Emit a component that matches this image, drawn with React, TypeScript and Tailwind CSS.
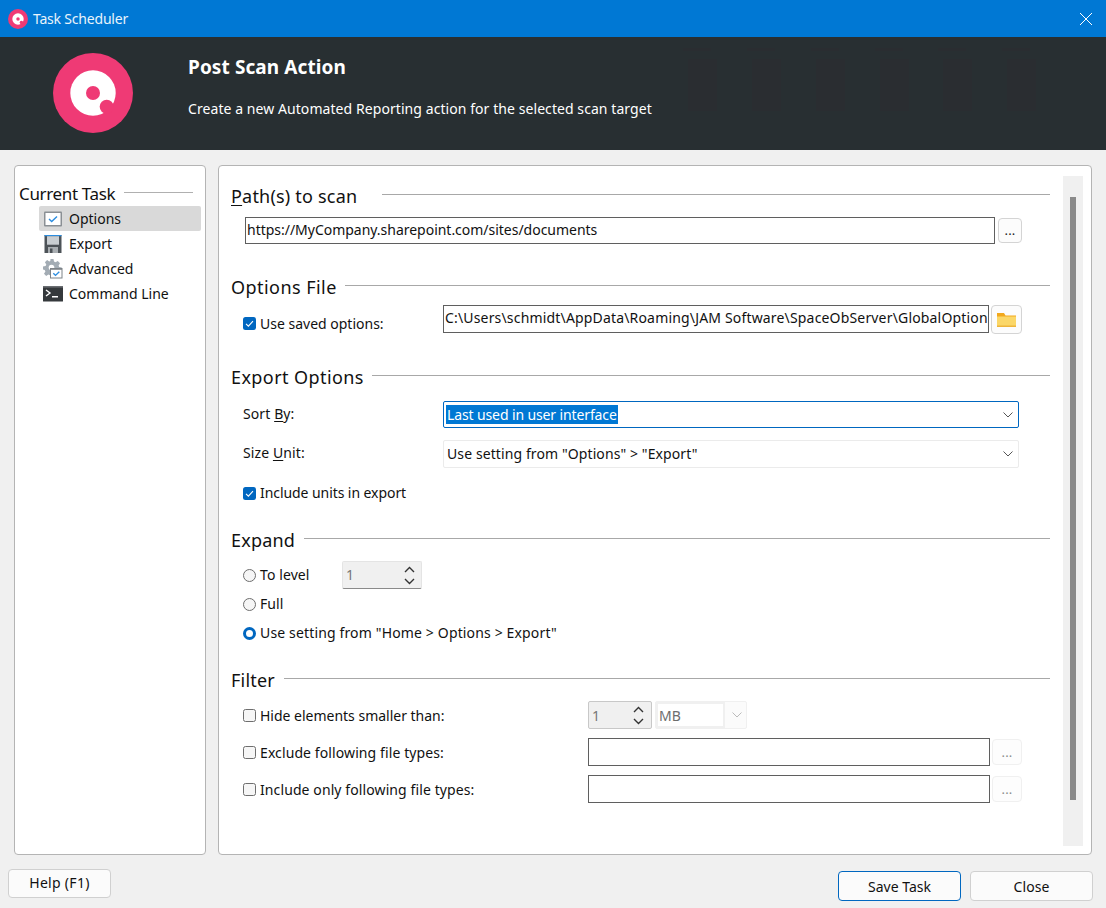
import React from "react";

function Logo({ size }: { size: number }) {
  return (
    <svg width={size} height={size} viewBox="0 0 80 80" className="shrink-0">
      <circle cx="40" cy="40" r="40" fill="#ef3a75" />
      <circle cx="40" cy="40" r="22.7" fill="#fff" />
      <circle cx="40" cy="40" r="7" fill="#ef3a75" />
      <circle cx="53.7" cy="53.7" r="7" fill="#ef3a75" />
    </svg>
  );
}

function Heading({ children, className }: { children: React.ReactNode; className: string }) {
  return (
    <div className={"flex h-[28px] w-[819px] items-center text-[18px] tracking-[0.2px] text-[#111] " + className}>
      <span>{children}</span>
      <div className="mb-[4px] h-px flex-1 bg-[#a8a8a8]" />
    </div>
  );
}

function Check({ on = false }: { on?: boolean }) {
  return on ? (
    <svg width="13" height="13" viewBox="0 0 13 13" className="shrink-0">
      <rect width="13" height="13" rx="2.5" fill="#0067c0" />
      <path d="M3 6.8 5.4 9.2 10 4.2" fill="none" stroke="#fff" strokeWidth="1.1" />
    </svg>
  ) : (
    <div className="h-[13px] w-[13px] shrink-0 rounded-[2.5px] border border-[#6e6e6e] bg-[#f6f6f6]" />
  );
}

function Radio({ on = false }: { on?: boolean }) {
  return on ? (
    <div className="h-[13px] w-[13px] shrink-0 rounded-full border-[3.5px] border-[#0067c0] bg-white" />
  ) : (
    <div className="h-[13px] w-[13px] shrink-0 rounded-full border border-[#6e6e6e] bg-[#f6f6f6]" />
  );
}

function Chevron({ color = "#555" }: { color?: string }) {
  return (
    <svg width="10" height="6" viewBox="0 0 10 6" className="shrink-0">
      <path d="M.5.5 5 5 9.5.5" fill="none" stroke={color} strokeWidth="1" />
    </svg>
  );
}

function Spin() {
  return (
    <svg width="11" height="19" viewBox="0 0 11 19" className="shrink-0">
      <path d="M1 6 5.5 1.5 10 6M1 13 5.5 17.5 10 13" fill="none" stroke="#333" strokeWidth="1.4" />
    </svg>
  );
}

function Dots({ className, dim = false }: { className: string; dim?: boolean }) {
  return (
    <div
      className={
        "flex items-center justify-center rounded-[4px] border pt-[1px] text-[13px] " +
        (dim ? "border-[#f0f0f0] bg-[#fdfdfd] text-[#8c8c8c] " : "border-[#d4d4d4] bg-[#fcfcfc] text-[#222] ") +
        className
      }
    >
      ...
    </div>
  );
}

const treeIcons = {
  options: (
    <svg width="20" height="20" viewBox="0 0 20 20">
      <rect x="1" y="2.5" width="18" height="15" rx="1" fill="#8a8f94" />
      <rect x="2.5" y="4" width="15" height="12" fill="#fff" />
      <path d="M6 10 8.7 12.6 14 7.5" fill="none" stroke="#2b8de0" strokeWidth="1.4" />
    </svg>
  ),
  export: (
    <svg width="20" height="20" viewBox="0 0 20 20">
      <path d="M1.5 1H18.5V19H1.5Z" fill="#4d5358" />
      <rect x="1.5" y="1" width="17" height="1.2" fill="#2b8de0" />
      <rect x="4" y="2.2" width="12" height="8.5" fill="#c9ced2" />
      <rect x="5" y="13" width="10" height="6" fill="#a9aeb2" />
      <rect x="7" y="14.5" width="2.5" height="4.5" fill="#4d5358" />
    </svg>
  ),
  advanced: (
    <svg width="20" height="20" viewBox="0 0 20 20">
      <path
        d="M7.5 0h3l.5 2.6 1.5.7L14.8 2 17 4.200l-1.400 2.200.6 1.500 2.600.5v1.600H7v6.200l-1.600-.7L3.200 16.900 1 14.700l1.400-2.200-.7-1.500L0 10.500v-3l2.600-.5.7-1.500L1.900 3.200 4.100 1l2.200 1.400 1-.4Z"
        fill="#a3acb4"
      />
      <circle cx="8.500" cy="8.500" r="2.800" fill="#fff" />
      <rect x="7" y="9" width="12.500" height="10.500" fill="#7d8388" />
      <rect x="8" y="10.800" width="10.500" height="7.700" fill="#fff" />
      <path d="M10.300 14.300 12.500 16.400 16.300 12.700" fill="none" stroke="#2b8de0" strokeWidth="1.400" />
    </svg>
  ),
  command: (
    <svg width="20" height="20" viewBox="0 0 20 20">
      <rect x="0" y="2" width="20" height="15.500" rx=".5" fill="#35393c" />
      <rect x="0" y="2" width="20" height="1.600" fill="#6a6e72" />
      <path d="M3 6 7 9 3 12" fill="none" stroke="#fff" strokeWidth="1.400" />
      <rect x="9" y="12" width="6" height="1.500" fill="#fff" />
    </svg>
  ),
};

function TreeRow({ icon, label, selected = false }: { icon: React.ReactNode; label: string; selected?: boolean }) {
  return (
    <div className={"flex h-[25px] items-center rounded-[2px] pl-[4px] tracking-[0px] " + (selected ? "bg-[#d9d9d9]" : "")}>
      <div className="flex w-[26px] shrink-0">{icon}</div>
      <span>{label}</span>
    </div>
  );
}

export default function App() {
  return (
    <div className="flex h-[908px] w-[1106px] flex-col overflow-hidden bg-[#f0f0f0] font-['Noto_Sans',sans-serif] text-[14px] tracking-[0.1px] text-[#111]">
      {/* Title bar */}
      <div className="flex h-[37px] shrink-0 items-center bg-[#0078d4] pl-[8px] pr-[13px] text-white">
        <Logo size={20} />
        <span className="ml-[5px] flex-1 text-[14px] tracking-[-0.2px] text-[#e8f3fb]">Task Scheduler</span>
        <svg width="14" height="14" viewBox="0 0 14 14">
          <path d="M1 1 13 13M13 1 1 13" stroke="#fff" strokeWidth="1" fill="none" />
        </svg>
      </div>

      {/* Banner */}
      <div className="relative flex h-[113px] shrink-0 items-start bg-[#282f32] text-white">
        <div className="ml-[53px] mt-[16px]">
          <Logo size={80} />
        </div>
        <div className="ml-[55px]">
          <div className="mt-[16px] text-[19px] font-bold leading-[28px]">Post Scan Action</div>
          <div className="mt-[18px] leading-[20px] tracking-[0.07px]">Create a new Automated Reporting action for the selected scan target</div>
        </div>
        <svg width="400" height="113" viewBox="0 0 400 113" className="absolute left-[670px] top-0">
          {[0, 64, 128, 192, 255, 319].map((x) => (
            <g key={x} fill="#2a2d31">
              <rect x={13 + x} y="11" width="28" height="3" />
              <rect x={18 + x} y="22" width="29" height="52" />
            </g>
          ))}
        </svg>
      </div>

      {/* Panels */}
      <div className="flex h-[705px] shrink-0 gap-[12px] pl-[14px] pt-[15px]">
        <div className="h-[690px] w-[192px] rounded-[4px] border border-[#b4b4b4] bg-white pl-[4px] pr-[4px] pt-[15px]">
          <div className="flex h-[25px] items-center text-[17px] tracking-[-0.35px]">
            <span>Current Task</span>
            <div className="mb-[3px] ml-[9px] mr-[8px] h-px flex-1 bg-[#b0b0b0]" />
          </div>
          <div className="ml-[20px]">
            <TreeRow icon={treeIcons.options} label="Options" selected />
            <TreeRow icon={treeIcons.export} label="Export" />
            <TreeRow icon={treeIcons.advanced} label="Advanced" />
            <TreeRow icon={treeIcons.command} label="Command Line" />
          </div>
        </div>

        <div className="flex h-[690px] w-[874px] rounded-[4px] border border-[#b4b4b4] bg-white pl-[12px] pr-[8px] pt-[10px]">
          <div className="-mt-[10px] w-[832px] shrink-0">
            <Heading className="mt-[16px] gap-[25px]">
              <span className="underline underline-offset-2">P</span>ath(s) to scan
            </Heading>
            <div className="ml-[14px] mt-[7px] flex items-center gap-[3px]">
              <div className="flex h-[27px] w-[750px] items-center border border-[#5f5f5f] bg-white px-[1px]">
                <span className="mb-[2px] tracking-[-0.02px]">https://MyCompany.sharepoint.com/sites/documents</span>
              </div>
              <Dots className="h-[25px] w-[24px]" />
            </div>

            <Heading className="mt-[29px] gap-[8px]">
              <span className="tracking-[0.45px]">Options File</span>
            </Heading>
            <div className="ml-[12px] mt-[4px] flex h-[29px] items-center">
              <div className="mt-[8px] flex w-[200px] items-center gap-[4px]">
                <Check on />
                <span className="tracking-[0px]">Use saved options:</span>
              </div>
              <div className="mb-[1px] flex h-[28px] w-[546px] items-center whitespace-nowrap border border-[#5f5f5f] bg-white px-[1px]">
                <span className="mb-[3px] tracking-[0.17px]">C:\Users\schmidt\AppData\Roaming\JAM Software\SpaceObServer\GlobalOption</span>
              </div>
              <div className="ml-[2px] flex h-[29px] w-[31px] items-center justify-center rounded-[4px] border border-[#d4d4d4] bg-[#fcfcfc]">
                <svg width="19" height="14" viewBox="0 0 19 14">
                  <path d="M0 0H7L8.500 2.500H19V4H0Z" fill="#f2a81d" />
                  <rect y="3.500" width="19" height="10.500" fill="#fbd768" />
                  <rect y="12.500" width="19" height="1.500" fill="#eeb53b" />
                </svg>
              </div>
            </div>

            <Heading className="mt-[29px] gap-[8px]">
              <span className="tracking-[0.42px]">Export Options</span>
            </Heading>
            <div className="ml-[12px] mt-[10px] flex h-[27px] items-center">
              <div className="mb-[2px] w-[200px]">Sort <span className="underline underline-offset-2">B</span>y:</div>
              <div className="flex h-[27px] w-[576px] items-center justify-between rounded-[2px] border border-[#0067c0] bg-white pl-[2px] pr-[5px]">
                <span className="bg-[#0078d4] px-[1px] leading-[19px] tracking-[-0.12px] text-white">Last used in user interface</span>
                <Chevron />
              </div>
            </div>
            <div className="ml-[12px] mt-[12px] flex h-[28px] items-center">
              <div className="mb-[4px] w-[200px]">Size <span className="underline underline-offset-2">U</span>nit:</div>
              <div className="flex h-[28px] w-[576px] items-center justify-between rounded-[2px] border border-[#ebebeb] bg-white pl-[3px] pr-[5px]">
                <span className="mb-[2px]">Use setting from "Options" &gt; "Export"</span>
                <Chevron />
              </div>
            </div>
            <div className="ml-[12px] mt-[12px] flex h-[26px] items-center gap-[4px]">
              <Check on />
              <span className="mb-[2px] tracking-[-0.07px]">Include units in export</span>
            </div>

            <Heading className="mt-[20px] gap-[9px]">Expand</Heading>
            <div className="ml-[12px] mt-[7px] flex h-[28px] items-center">
              <div className="flex w-[99px] items-center gap-[4px]">
                <Radio />
                <span className="mb-[2px]">To level</span>
              </div>
              <div className="flex h-[28px] w-[80px] items-center justify-between rounded-[2px] border-b border-l border-r border-t border-b-[#8a8a8a] border-l-[#e4e4e4] border-r-[#e4e4e4] border-t-[#e4e4e4] bg-[#f0f0f0] pl-[3px] pr-[6px] text-[#777]">
                <span className="mb-[2px]">1</span>
                <Spin />
              </div>
            </div>
            <div className="ml-[12px] mt-[2px] flex h-[26px] items-center gap-[4px]">
              <Radio />
              <span className="mb-[2px]">Full</span>
            </div>
            <div className="ml-[12px] mt-[3px] flex h-[26px] items-center gap-[4px]">
              <Radio on />
              <span className="mb-[2px] tracking-[0.15px]">Use setting from "Home &gt; Options &gt; Export"</span>
            </div>

            <Heading className="mt-[20px] gap-[9px]">Filter</Heading>
            <div className="ml-[12px] mt-[7px] flex h-[28px] items-center">
              <div className="flex w-[345px] items-center gap-[4px]">
                <Check />
                <span className="tracking-[-0.01px]">Hide elements smaller than:</span>
              </div>
              <div className="flex h-[28px] w-[64px] items-center justify-between rounded-[2px] border border-[#c8c8c8] bg-[#f0f0f0] pl-[3px] pr-[7px] text-[#777]">
                <span>1</span>
                <Spin />
              </div>
              <div className="ml-[3px] flex h-[28px] w-[92px] items-center rounded-[2px] border border-[#f0f0f0] bg-[#fbfbfb]">
                <div className="ml-[2px] flex h-[22px] w-[65px] items-center bg-[#fff] pl-[1px] text-[#6d6d6d] outline-2 outline-[#f0f0f0]">MB</div>
                <div className="ml-[9px]"><Chevron color="#bbb" /></div>
              </div>
            </div>
            <div className="ml-[12px] mt-[9px] flex h-[28px] items-center">
              <div className="flex w-[345px] items-center gap-[4px]">
                <Check />
                <span>Exclude following file types:</span>
              </div>
              <div className="h-[28px] w-[402px] border border-[#5f5f5f] bg-white" />
              <Dots dim className="ml-[2px] h-[26px] w-[30px]" />
            </div>
            <div className="ml-[12px] mt-[9px] flex h-[28px] items-center">
              <div className="flex w-[345px] items-center gap-[4px]">
                <Check />
                <span>Include only following file types:</span>
              </div>
              <div className="h-[28px] w-[402px] border border-[#5f5f5f] bg-white" />
              <Dots dim className="ml-[2px] h-[26px] w-[30px]" />
            </div>
          </div>

          {/* Scrollbar */}
          <div className="h-[670px] w-[20px] shrink-0 bg-[#f0f0f0] pl-[7px] pt-[21px]">
            <div className="h-[603px] w-[6px] bg-[#8a8a8a]" />
          </div>
        </div>
      </div>

      {/* Footer */}
      <div className="flex items-start pl-[8px]">
        <div className="mt-[14px] flex h-[29px] w-[103px] items-center justify-center rounded-[4px] border border-[#d0d0d0] bg-[#fbfbfb] tracking-[0.3px]">
          <span className="mb-[2px]">Help (F1)</span>
        </div>
        <div className="ml-[727px] mt-[16px] flex h-[30px] w-[123px] items-center justify-center rounded-[4px] border border-[#0067c0] bg-[#fbfbfb] tracking-[0px]">Save Task</div>
        <div className="ml-[9px] mt-[16px] flex h-[30px] w-[123px] items-center justify-center rounded-[4px] border border-[#d0d0d0] bg-[#fbfbfb]">Close</div>
      </div>
    </div>
  );
}
